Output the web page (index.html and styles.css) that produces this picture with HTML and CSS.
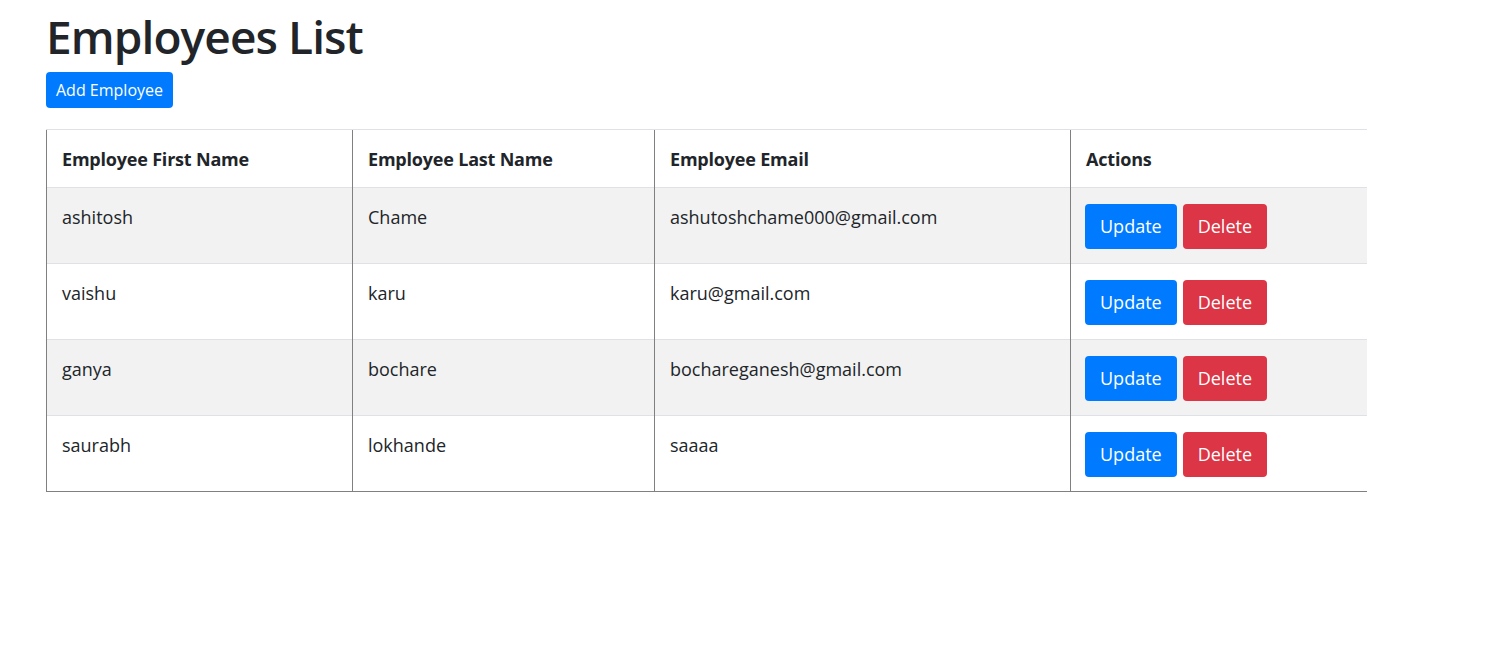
FILE: index.html
```html
<!DOCTYPE html>
<html>
<head>
<meta charset="utf-8">
<link rel="stylesheet" href="styles.css">
<title>Employees List</title>
</head>
<body>
<div class="container">
  <h1 class="title">Employees List</h1>
  <div class="toolbar">
    <button class="btn btn-primary">Add Employee</button>
  </div>
  <table class="emp-table">
    <colgroup>
      <col class="c1"><col class="c2"><col class="c3"><col class="c4">
    </colgroup>
    <thead>
      <tr>
        <th>Employee First Name</th>
        <th>Employee Last Name</th>
        <th>Employee Email</th>
        <th>Actions</th>
      </tr>
    </thead>
    <tbody>
      <tr>
        <td>ashitosh</td>
        <td>Chame</td>
        <td>ashutoshchame000@gmail.com</td>
        <td><div class="actions"><button class="btn btn-lg btn-primary">Update</button><button class="btn btn-lg btn-danger">Delete</button></div></td>
      </tr>
      <tr>
        <td>vaishu</td>
        <td>karu</td>
        <td>karu@gmail.com</td>
        <td><div class="actions"><button class="btn btn-lg btn-primary">Update</button><button class="btn btn-lg btn-danger">Delete</button></div></td>
      </tr>
      <tr>
        <td>ganya</td>
        <td>bochare</td>
        <td>bochareganesh@gmail.com</td>
        <td><div class="actions"><button class="btn btn-lg btn-primary">Update</button><button class="btn btn-lg btn-danger">Delete</button></div></td>
      </tr>
      <tr>
        <td>saurabh</td>
        <td>lokhande</td>
        <td>saaaa</td>
        <td><div class="actions"><button class="btn btn-lg btn-primary">Update</button><button class="btn btn-lg btn-danger">Delete</button></div></td>
      </tr>
    </tbody>
  </table>
</div>
</body>
</html>
```
FILE: styles.css
```css
html, body {
  margin: 0;
  padding: 0;
  background: #fff;
}
body {
  font-family: "Open Sans", "Noto Sans", "DejaVu Sans", sans-serif;
  color: #212529;
}
.container {
  width: 1320px;
  padding: 0 0 0 46px;
}
.title {
  margin: 0;
  padding-top: 6px;
  font-size: 46px;
  font-weight: 600;
  line-height: 60px;
  letter-spacing: -0.9px;
}
.toolbar {
  margin-top: 6px;
  margin-bottom: 21px;
  display: flex;
}
.btn {
  font-family: inherit;
  border: none;
  border-radius: 4px;
  color: #fff;
  cursor: pointer;
  font-size: 16px;
  line-height: 24px;
  padding: 6px 10px;
  height: 36px;
}
.btn-lg {
  font-size: 18px;
  line-height: 27px;
  padding: 9px 15px;
  height: 45px;
}
.btn-primary { background: #007bff; }
.btn-danger { background: #dc3545; }
.emp-table {
  width: 1320px;
  border-collapse: collapse;
  table-layout: fixed;
  font-size: 18px;
}
.c1 { width: 306px; }
.c2 { width: 302px; }
.c3 { width: 416px; }
.c4 { width: 296px; }
.emp-table th,
.emp-table td {
  text-align: left;
  vertical-align: top;
  padding: 16px 15px 14px 15px;
  line-height: 27px;
  border-top: 1px solid #dee2e6;
  border-left: 1px solid #808080;
}
.emp-table th {
  font-weight: 700;
  letter-spacing: -0.2px;
}
.emp-table td:last-child {
  padding-left: 14px;
}
.emp-table tbody tr:nth-child(odd) {
  background: #f2f2f2;
}
.emp-table tbody tr:last-child td {
  border-bottom: 1px solid #808080;
}
.actions {
  display: flex;
  gap: 6px;
}
```
